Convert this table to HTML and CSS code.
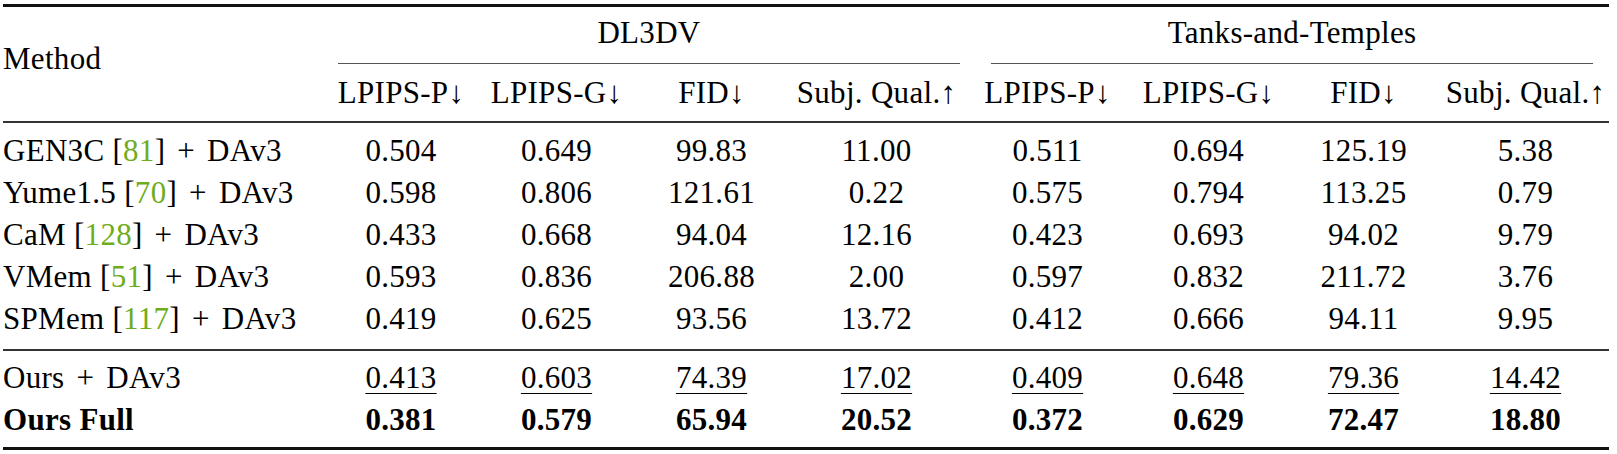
FILE: index.html
```html
<!DOCTYPE html>
<html lang="en">
<head>
<meta charset="utf-8">
<title>Comparison table</title>
<link rel="stylesheet" href="styles.css">
</head>
<body>
<div class="tbl">
  <div class="rule thick"></div>
  <div class="head">
    <div class="method">Method</div>
    <div class="group dl"><div class="glabel">DL3DV</div></div>
    <div class="group tt"><div class="glabel">Tanks-and-Temples</div></div>
    <div class="metric">LPIPS-P↓</div>
    <div class="metric">LPIPS-G↓</div>
    <div class="metric">FID↓</div>
    <div class="metric">Subj. Qual.↑</div>
    <div class="metric">LPIPS-P↓</div>
    <div class="metric">LPIPS-G↓</div>
    <div class="metric">FID↓</div>
    <div class="metric">Subj. Qual.↑</div>
  </div>
  <div class="rule mid"></div>
  <div class="block block-a">
    <div class="row"><div class="name">GEN3C [<span class="cite">81</span>]<span class="plus">+</span>DAv3</div><div>0.504</div><div>0.649</div><div>99.83</div><div>11.00</div><div>0.511</div><div>0.694</div><div>125.19</div><div>5.38</div></div>
    <div class="row"><div class="name">Yume1.5 [<span class="cite">70</span>]<span class="plus">+</span>DAv3</div><div>0.598</div><div>0.806</div><div>121.61</div><div>0.22</div><div>0.575</div><div>0.794</div><div>113.25</div><div>0.79</div></div>
    <div class="row"><div class="name">CaM [<span class="cite">128</span>]<span class="plus">+</span>DAv3</div><div>0.433</div><div>0.668</div><div>94.04</div><div>12.16</div><div>0.423</div><div>0.693</div><div>94.02</div><div>9.79</div></div>
    <div class="row"><div class="name">VMem [<span class="cite">51</span>]<span class="plus">+</span>DAv3</div><div>0.593</div><div>0.836</div><div>206.88</div><div>2.00</div><div>0.597</div><div>0.832</div><div>211.72</div><div>3.76</div></div>
    <div class="row"><div class="name">SPMem [<span class="cite">117</span>]<span class="plus">+</span>DAv3</div><div>0.419</div><div>0.625</div><div>93.56</div><div>13.72</div><div>0.412</div><div>0.666</div><div>94.11</div><div>9.95</div></div>
  </div>
  <div class="rule mid"></div>
  <div class="block block-b">
    <div class="row second"><div class="name">Ours<span class="plus">+</span>DAv3</div><div><u>0.413</u></div><div><u>0.603</u></div><div><u>74.39</u></div><div><u>17.02</u></div><div><u>0.409</u></div><div><u>0.648</u></div><div><u>79.36</u></div><div><u>14.42</u></div></div>
    <div class="row best"><div class="name">Ours Full</div><div>0.381</div><div>0.579</div><div>65.94</div><div>20.52</div><div>0.372</div><div>0.629</div><div>72.47</div><div>18.80</div></div>
  </div>
  <div class="rule thick"></div>
</div>
</body>
</html>
```
FILE: styles.css
```css
html, body {
  margin: 0;
  padding: 0;
  background: #ffffff;
}

body {
  font-family: "Liberation Serif", "Times New Roman", serif;
  font-size: 31px;
  letter-spacing: 0.3px;
  color: #000000;
}

.tbl {
  width: 1606px;
  margin-left: 3px;
  padding-top: 4px;
}

.rule {
  width: 100%;
}

.rule.thick {
  height: 3px;
  background: #111111;
}

.rule.mid {
  height: 2px;
  background: #333333;
}

.head,
.row {
  display: grid;
  grid-template-columns: 319px 158px 153px 157px 173px 169px 153px 157px 167px;
}

.method {
  grid-column: 1;
  grid-row: 1 / 3;
  line-height: 40px;
  padding-top: 32px;
  text-align: left;
}

.group {
  grid-row: 1;
  padding-top: 6px;
}

.group.dl {
  grid-column: 2 / 6;
  padding-left: 16px;
  padding-right: 3px;
}

.group.tt {
  grid-column: 6 / 10;
  padding-left: 28px;
  padding-right: 16px;
}

.glabel {
  line-height: 40px;
  padding-bottom: 10px;
  text-align: center;
  border-bottom: 1px solid #555555;
}

.metric {
  grid-row: 2;
  line-height: 40px;
  padding-top: 9px;
  padding-bottom: 8px;
  text-align: center;
  white-space: nowrap;
}

.block-a {
  padding-top: 7px;
  padding-bottom: 9px;
}

.block-b {
  padding-top: 6px;
  padding-bottom: 6px;
}

.row > div {
  line-height: 42px;
  height: 42px;
  text-align: center;
  white-space: nowrap;
}

.row > .name {
  text-align: left;
}

.cite {
  color: #6fad1c;
}

.plus {
  margin: 0 12px;
}

u {
  text-decoration: underline;
  text-decoration-thickness: 1px;
  text-underline-offset: 5px;
}

.row.best {
  font-weight: bold;
}
```
